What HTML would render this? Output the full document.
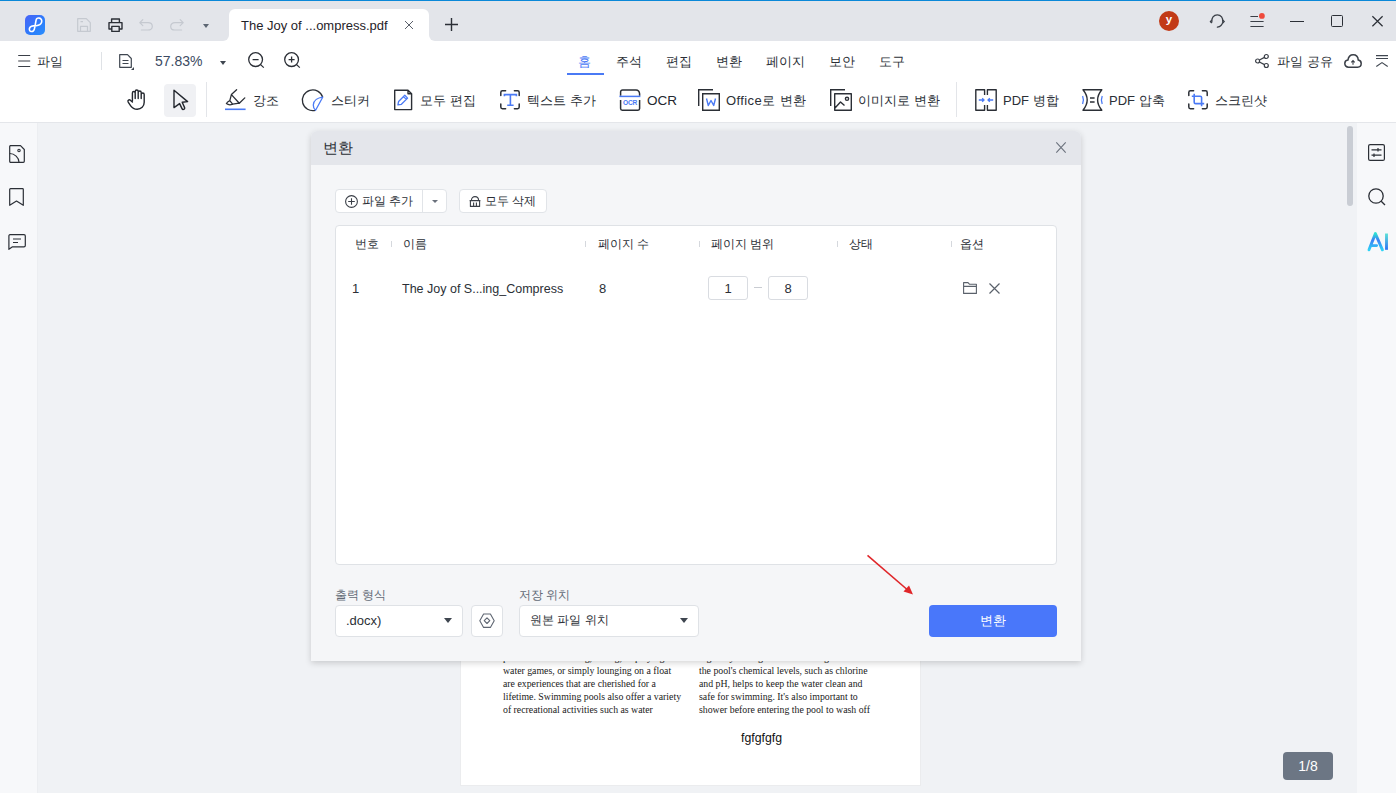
<!DOCTYPE html>
<html><head><meta charset="utf-8">
<style>
*{box-sizing:border-box}
html,body{margin:0;padding:0;width:1396px;height:793px;overflow:hidden;background:#f0f2f5;font-family:"Liberation Sans",sans-serif;color:#23272e}
.a{position:absolute}
svg{position:absolute;overflow:visible}
.t{position:absolute;white-space:nowrap;line-height:1}
.k{font-size:13px;color:#2b2f36}
.k2{font-size:12px;color:#2b2f36}
.k3{font-size:12px;color:#2b2f36}
</style></head><body>
<!-- top line -->
<div class="a" style="left:0;top:0;width:1396px;height:1px;background:#0a88d8"></div>
<!-- title bar -->
<div class="a" style="left:0;top:1px;width:1396px;height:40px;background:#e3e5ea"></div>

<!-- TITLEBAR CONTENT -->
<div class="a" style="left:25px;top:15px;width:20px;height:20px;border-radius:5px;background:linear-gradient(135deg,#4a63f7,#2c7dfb 60%,#2a8ffd)"></div>
<svg style="left:25px;top:15px" width="20" height="20" viewBox="0 0 20 20"><path d="M9.8 12.2 L11.1 5.2 C11.4 3.6 12.8 2.9 14.2 3.1 C16.2 3.4 17.2 5.4 16.6 7.3 C16 9.3 13.8 10.5 11.2 10.7 L8.3 10.9 C5.6 11.1 4 12.8 4.4 14.8 C4.8 16.6 7 17.1 8.4 15.9 C9.3 15.1 9.6 13.8 9.8 12.2" fill="none" stroke="#fff" stroke-width="1.6" stroke-linecap="round" stroke-linejoin="round"/></svg>
<!-- save (disabled) -->
<svg style="left:77px;top:18px" width="14" height="14" viewBox="0 0 14 14"><path d="M0.7 13.3 V0.7 H9.3 L13.3 4.7 V13.3 Z M3.5 13.3 V8.3 H10.5 V13.3 M3.5 3.6 H6" fill="none" stroke="#c5c9d0" stroke-width="1.2" stroke-linejoin="round"/></svg>
<!-- print -->
<svg style="left:108px;top:18px" width="15" height="14" viewBox="0 0 15 14"><path d="M3.6 4.6 V1 H11.4 V4.6 M3.2 11 H1 V4.6 H14 V11 H11.8 M3.8 8.4 H11.2 V13.4 H3.8 Z" fill="none" stroke="#2b2f36" stroke-width="1.4" stroke-linejoin="round"/></svg>
<!-- undo -->
<svg style="left:139px;top:19px" width="14" height="12" viewBox="0 0 14 12"><path d="M2.4 11 H9 C11.7 11 13.3 9.4 13.3 7.4 C13.3 5.4 11.7 3.7 9 3.7 H0.8 M3.8 0.7 L0.8 3.7 L3.8 6.7" fill="none" stroke="#c5c9d0" stroke-width="1.2" stroke-linejoin="round" stroke-linecap="round"/></svg>
<!-- redo -->
<svg style="left:170px;top:18px" width="14" height="13" viewBox="0 0 14 13"><path d="M11.6 12 H5 C2.3 12 0.7 10.4 0.7 8.4 C0.7 6.4 2.3 4.7 5 4.7 H13.2 M10.2 1.7 L13.2 4.7 L10.2 7.7" fill="none" stroke="#c5c9d0" stroke-width="1.2" stroke-linejoin="round" stroke-linecap="round"/></svg>
<svg style="left:203px;top:24px" width="6" height="4" viewBox="0 0 6 4"><path d="M0 0 H6 L3 4 Z" fill="#5d6673"/></svg>
<!-- tab -->
<div class="a" style="left:229px;top:9px;width:200px;height:32px;background:#fff;border-radius:6px 6px 0 0"></div>
<div class="a" style="left:223px;top:35px;width:6px;height:6px;background:#fff"></div>
<div class="a" style="left:217px;top:29px;width:12px;height:12px;background:#e3e5ea;border-radius:0 0 6px 0"></div>
<div class="a" style="left:429px;top:35px;width:6px;height:6px;background:#fff"></div>
<div class="a" style="left:429px;top:29px;width:12px;height:12px;background:#e3e5ea;border-radius:0 0 0 6px"></div>
<div class="t" style="left:241px;top:19px;font-size:13px;color:#1f2329">The Joy of ...ompress.pdf</div>
<svg style="left:404px;top:21px" width="10" height="8" viewBox="0 0 10 8"><path d="M1 0 L9 8 M9 0 L1 8" stroke="#5a606a" stroke-width="1"/></svg>
<svg style="left:445px;top:18px" width="13" height="13" viewBox="0 0 13 13"><path d="M6.5 0 V13 M0 6.5 H13" stroke="#2b2f36" stroke-width="1.4"/></svg>
<!-- avatar -->
<div class="a" style="left:1159px;top:11px;width:20px;height:20px;border-radius:50%;background:#c23a17"></div>
<div class="t" style="left:1159px;top:14px;width:20px;text-align:center;font-size:11.5px;font-weight:bold;color:#fff">y</div>
<!-- headset -->
<svg style="left:1210px;top:14px" width="15" height="14" viewBox="0 0 15 14"><path d="M1.8 8.2 C1.2 4 3.8 0.8 7.3 0.8 C10.8 0.8 13.4 4 12.8 8.2 C12.2 11 10.4 12.8 7.4 13.2" fill="none" stroke="#3a3f47" stroke-width="1.3" stroke-linecap="round"/><path d="M1.6 6.2 L0.4 7.6 L1.8 9 M12.9 6.2 L14.2 7.6 L12.8 9" fill="none" stroke="#3a3f47" stroke-width="1.2"/></svg>
<!-- menu -->
<svg style="left:1250px;top:12px" width="16" height="16" viewBox="0 0 16 16"><path d="M0.4 4.5 H8 M0.4 9.5 H13.6 M0.4 14.5 H13.6" stroke="#3a3f47" stroke-width="1.1"/><circle cx="11.9" cy="3.9" r="2.9" fill="#ef4a3c"/></svg>
<!-- min max close -->
<div class="a" style="left:1290px;top:20.6px;width:14px;height:1.2px;background:#2b2f36"></div>
<div class="a" style="left:1331px;top:15px;width:12px;height:11.6px;border:1.2px solid #2b2f36;border-radius:1.5px"></div>
<svg style="left:1371.5px;top:15.8px" width="11" height="10.5" viewBox="0 0 11 10.5"><path d="M0.4 0.3 L10.6 10.2 M10.6 0.3 L0.4 10.2" stroke="#2b2f36" stroke-width="1.2"/></svg>

<!-- toolbar -->
<div class="a" style="left:0;top:41px;width:1396px;height:81px;background:#fff"></div>

<!-- TOOLBAR CONTENT -->
<svg style="left:18px;top:55px" width="13" height="12" viewBox="0 0 13 12"><path d="M0.2 0.5 H12.2 M0.2 6 H12.2 M0.2 11.5 H12.2" stroke="#3a3f47" stroke-width="1.1"/></svg>
<div class="t k" style="left:37px;top:55px">파일</div>
<div class="a" style="left:101px;top:52px;width:1px;height:18px;background:#dfe2e6"></div>
<svg style="left:119px;top:54px" width="15" height="16" viewBox="0 0 15 16"><path d="M0.7 0.7 H8.5 L12.3 4.5 V13.3 H0.7 Z M3.5 6.5 H9.5 M3.5 9.5 H9.5" fill="none" stroke="#3f4650" stroke-width="1.2" stroke-linejoin="round"/><path d="M15 13 V16 H12 Z" fill="#3f4650"/></svg>
<div class="t" style="left:155px;top:54px;font-size:14px;color:#3b4a62">57.83%</div>
<svg style="left:220px;top:61px" width="6" height="4" viewBox="0 0 6 4"><path d="M0 0 H6 L3 4 Z" fill="#3f4650"/></svg>
<svg style="left:248px;top:52px" width="17" height="16" viewBox="0 0 17 16"><circle cx="7.6" cy="7.6" r="6.9" fill="none" stroke="#2b2f36" stroke-width="1.3"/><path d="M4.6 7.6 H10.6 M12.6 12.6 L15.8 15.6" stroke="#2b2f36" stroke-width="1.3"/></svg>
<svg style="left:284px;top:52px" width="17" height="16" viewBox="0 0 17 16"><circle cx="7.6" cy="7.6" r="6.9" fill="none" stroke="#2b2f36" stroke-width="1.3"/><path d="M4.6 7.6 H10.6 M7.6 4.6 V10.6 M12.6 12.6 L15.8 15.6" stroke="#2b2f36" stroke-width="1.3"/></svg>
<!-- tabs -->
<div class="t k" style="left:578px;top:55px;color:#4a7af5">홈</div>
<div class="a" style="left:567px;top:73px;width:37px;height:2px;background:#4a7af5"></div>
<div class="t k" style="left:616px;top:55px">주석</div>
<div class="t k" style="left:666px;top:55px">편집</div>
<div class="t k" style="left:716px;top:55px">변환</div>
<div class="t k" style="left:766px;top:55px">페이지</div>
<div class="t k" style="left:829px;top:55px">보안</div>
<div class="t k" style="left:879px;top:55px">도구</div>
<!-- right of row2 -->
<svg style="left:1255px;top:54px" width="14" height="14" viewBox="0 0 14 14"><circle cx="11.3" cy="2.5" r="2" fill="none" stroke="#3a3f47" stroke-width="1.2"/><circle cx="2.6" cy="7" r="2" fill="none" stroke="#3a3f47" stroke-width="1.2"/><circle cx="11.3" cy="11.5" r="2" fill="none" stroke="#3a3f47" stroke-width="1.2"/><path d="M4.4 6 L9.5 3.4 M4.4 8 L9.5 10.6" stroke="#3a3f47" stroke-width="1.2"/></svg>
<div class="t k" style="left:1277px;top:55px">파일 공유</div>
<svg style="left:1344px;top:54px" width="18" height="14" viewBox="0 0 18 14"><path d="M4.5 13.2 C2.3 13.2 0.8 11.6 0.8 9.6 C0.8 7.7 2.2 6.3 3.9 6.1 C4.4 3 6.6 0.8 9.2 0.8 C11.9 0.8 14 3 14.3 6.1 C16 6.4 17.2 7.8 17.2 9.6 C17.2 11.6 15.7 13.2 13.6 13.2 Z" fill="none" stroke="#3a3f47" stroke-width="1.5"/><path d="M9 10.8 V6.8 M7.3 8.3 L9 6.6 L10.7 8.3" fill="none" stroke="#3a3f47" stroke-width="1.1"/></svg>
<svg style="left:1376px;top:55px" width="12" height="12" viewBox="0 0 12 12"><path d="M0 0.6 H12 M0 3.5 H12 M0.3 11.5 L6 7.6 L11.7 11.5" fill="none" stroke="#3f4650" stroke-width="1.1"/></svg>
<!-- row3 -->
<svg style="left:127px;top:89px" width="20" height="21" viewBox="0 0 20 21"><path d="M5.4 12 V4 C5.4 2 8.2 2 8.2 4 V9.6 M8.2 9.6 V2.4 C8.2 0.5 11.2 0.5 11.2 2.4 V9.6 M11.2 9.6 V3.4 C11.2 1.5 14.2 1.5 14.2 3.4 V9.6 M14.2 9.6 V5.4 C14.2 3.5 17.2 3.5 17.2 5.4 V13.2 C17.2 17.4 14.2 20.2 10.2 20.2 C7.2 20.2 5.2 19 3.7 16.8 L1.2 13.2 C0.2 11.6 2.2 10 3.6 11.4 L5.4 13" fill="none" stroke="#23272e" stroke-width="1.4" stroke-linejoin="round" stroke-linecap="round"/></svg>
<div class="a" style="left:164px;top:84px;width:32px;height:33px;border-radius:4px;background:#f0f1f4"></div>
<svg style="left:172px;top:89px" width="17" height="22" viewBox="0 0 17 22"><path d="M2 1.2 L15.6 12.6 L10.2 13.2 L12.6 18.6 C12.9 19.4 12.4 20.2 11.6 20.4 C10.9 20.6 10.3 20.3 10 19.6 L7.6 14.6 L2 18.6 Z" fill="none" stroke="#23272e" stroke-width="1.4" stroke-linejoin="round"/></svg>
<div class="a" style="left:206px;top:82px;width:1px;height:35px;background:#e3e5e9"></div>
<!-- highlight -->
<svg style="left:225px;top:89px" width="22" height="22" viewBox="0 0 22 22"><path d="M11.6 0.8 L6.4 5.6 L4.8 11.6 C3.2 12.4 1.8 13.4 1.4 14.6 C3.2 16 5.8 16 7.6 15.2 L14.3 14.2 L6.4 5.6 M4.8 11.6 L7.6 15.2 M14.3 14.2 L19.8 8.9" fill="none" stroke="#2b2f36" stroke-width="1.3" stroke-linejoin="round" stroke-linecap="round"/><path d="M0 20.3 H20.6" stroke="#4a7af5" stroke-width="1.6"/></svg>
<div class="t k" style="left:253px;top:94px">강조</div>
<!-- sticker -->
<svg style="left:302px;top:89px" width="22" height="22" viewBox="0 0 22 22"><path d="M20.7 8.2 A10.4 10.4 0 1 0 13.4 21.3" fill="none" stroke="#2b2f36" stroke-width="1.3"/><path d="M20.7 8.2 L13.6 21.2 C12.2 20 11.2 18 11.3 16 C11.5 11.5 16 8.8 20.7 8.2 Z" fill="none" stroke="#4a7af5" stroke-width="1.3" stroke-linejoin="round"/></svg>
<div class="t k" style="left:331px;top:94px">스티커</div>
<!-- edit all -->
<svg style="left:394px;top:89px" width="19" height="22" viewBox="0 0 19 22"><path d="M0.7 1.2 H14 L17.6 4.8 V20.6 H0.7 Z M14 1.2 V4.8 H17.6" fill="none" stroke="#2b2f36" stroke-width="1.4" stroke-linejoin="round"/><path d="M3.9 15.9 L4.6 12.5 L10.8 6.3 L13.6 9.1 L7.4 15.3 Z M9.5 7.6 L12.3 10.4" fill="none" stroke="#4a7af5" stroke-width="1.3" stroke-linejoin="round"/></svg>
<div class="t k" style="left:420px;top:94px">모두 편집</div>
<!-- add text -->
<svg style="left:500px;top:90px" width="20" height="20" viewBox="0 0 20 20"><path d="M0.8 5.6 V2.4 C0.8 1.5 1.5 0.8 2.4 0.8 H5.6 M14.4 0.8 H17.6 C18.5 0.8 19.2 1.5 19.2 2.4 V5.6 M19.2 13.9 V17.1 C19.2 18 18.5 18.7 17.6 18.7 H14.4 M5.6 18.7 H2.4 C1.5 18.7 0.8 18 0.8 17.1 V13.9" fill="none" stroke="#2b2f36" stroke-width="1.5" stroke-linecap="round"/><path d="M4.4 6.2 V4.6 H16.4 V6.2 M10.4 4.6 V15.3 M7.2 15.3 H13.6" fill="none" stroke="#4a7af5" stroke-width="1.6"/></svg>
<div class="t k" style="left:527px;top:94px">텍스트 추가</div>
<!-- OCR -->
<svg style="left:619px;top:89px" width="22" height="22" viewBox="0 0 22 22"><path d="M1.6 6.8 V3 C1.6 1.8 2.4 0.9 3.6 0.9 H17 C19 0.9 20.4 2.6 20.6 4.8 V6.8 M1.6 11 V19.6 C1.6 20.6 2.3 21.2 3.2 21.2 H19 C19.9 21.2 20.6 20.6 20.6 19.6 V11" fill="none" stroke="#2b2f36" stroke-width="1.5"/><path d="M0.4 7.4 H21.4" stroke="#4a7af5" stroke-width="1.5"/><text x="11" y="16.1" text-anchor="middle" font-family="Liberation Sans" font-weight="bold" font-size="6.6" letter-spacing="-0.2" fill="#4a7af5">OCR</text></svg>
<div class="t" style="left:647px;top:94px;font-size:13.5px">OCR</div>
<!-- office -->
<svg style="left:698px;top:89px" width="22" height="22" viewBox="0 0 22 22"><path d="M0.7 17 V0.7 H15" fill="none" stroke="#2b2f36" stroke-width="1.4"/><path d="M4.7 4.7 H21.3 V21.3 H4.7 Z" fill="none" stroke="#2b2f36" stroke-width="1.4"/><path d="M8.5 9.5 L10.3 16.5 L13 11.5 L15.7 16.5 L17.5 9.5" fill="none" stroke="#4a7af5" stroke-width="1.4" stroke-linejoin="round"/></svg>
<div class="t k" style="left:726px;top:94px;letter-spacing:0.4px">Office로 변환</div>
<!-- image -->
<svg style="left:830px;top:89px" width="22" height="22" viewBox="0 0 22 22"><path d="M0.7 17 V0.7 H15" fill="none" stroke="#2b2f36" stroke-width="1.4"/><path d="M4.7 4.7 H21.3 V21.3 H4.7 Z M5 19 L10.5 13 L14.5 16.5 M17 9.8 m-1.6 0 a1.6 1.6 0 1 0 3.2 0 a1.6 1.6 0 1 0 -3.2 0" fill="none" stroke="#2b2f36" stroke-width="1.4" stroke-linejoin="round"/></svg>
<div class="t k" style="left:858px;top:94px">이미지로 변환</div>
<div class="a" style="left:956px;top:82px;width:1px;height:35px;background:#e3e5e9"></div>
<!-- merge -->
<svg style="left:975px;top:89px" width="23" height="22" viewBox="0 0 23 22"><path d="M9.6 6 V0.8 H0.8 V21.2 H9.6 V16 M12.4 6 V0.8 H21.2 V21.2 H12.4 V16" fill="none" stroke="#2b2f36" stroke-width="1.4" stroke-linejoin="round"/><path d="M3.8 11 H9 M7.2 9.2 L9 11 L7.2 12.8 M18.2 11 H13 M14.8 9.2 L13 11 L14.8 12.8" fill="none" stroke="#4a7af5" stroke-width="1.3"/></svg>
<div class="t k" style="left:1003px;top:94px">PDF 병합</div>
<!-- compress -->
<svg style="left:1082px;top:89px" width="21" height="22" viewBox="0 0 21 22"><path d="M1 0.8 H19.8 C16.4 5 15.6 8 15.6 11 C15.6 14 16.4 17 19.8 21.2 H1 C4.4 17 5.2 14 5.2 11 C5.2 8 4.4 5 1 0.8 Z" fill="none" stroke="#2b2f36" stroke-width="1.4" stroke-linejoin="round"/><path d="M8 9 H12.6 M8 13 H12.6" stroke="#2b2f36" stroke-width="1.5"/><path d="M0.6 7 C1.6 9.5 1.6 12.5 0.6 15 M20.2 7 C19.2 9.5 19.2 12.5 20.2 15" fill="none" stroke="#4a7af5" stroke-width="1.3"/></svg>
<div class="t k" style="left:1109px;top:94px">PDF 압축</div>
<!-- screenshot -->
<svg style="left:1188px;top:90px" width="20" height="20" viewBox="0 0 20 20"><path d="M0.8 5.6 V2.4 C0.8 1.5 1.5 0.8 2.4 0.8 H5.6 M14.4 0.8 H17.6 C18.5 0.8 19.2 1.5 19.2 2.4 V5.6 M19.2 13.9 V17.1 C19.2 18 18.5 18.7 17.6 18.7 H14.4 M5.6 18.7 H2.4 C1.5 18.7 0.8 18 0.8 17.1 V13.9" fill="none" stroke="#2b2f36" stroke-width="1.5" stroke-linecap="round"/><path d="M6.2 3.8 V12.2 C6.2 13 6.8 13.6 7.6 13.6 H16.2 M3.8 6.2 H12.2 C13 6.2 13.6 6.8 13.6 7.6 V16.2" fill="none" stroke="#4a7af5" stroke-width="1.6"/></svg>
<div class="t k" style="left:1215px;top:94px">스크린샷</div>

<div class="a" style="left:0;top:122px;width:1396px;height:1px;background:#e4e6ea"></div>
<!-- left sidebar -->
<div class="a" style="left:0;top:123px;width:38px;height:670px;background:#f7f8fa;border-right:1px solid #eceef1"></div>
<!-- right sidebar -->
<div class="a" style="left:1357px;top:123px;width:39px;height:670px;background:#f7f8fa"></div>

<!-- left sidebar icons -->
<svg style="left:9px;top:145px" width="16" height="18" viewBox="0 0 16 18"><path d="M1.2 0.7 H11.5 L15.3 4.5 V16.3 C15.3 16.8 15 17.3 14.3 17.3 H1.7 C1 17.3 0.7 16.8 0.7 16.3 V1.7 C0.7 1.2 1 0.7 1.7 0.7 Z" fill="none" stroke="#2b2f36" stroke-width="1.2" stroke-linejoin="round"/><path d="M0.7 8.5 C5.5 8.5 10 12.5 10 17.3" fill="none" stroke="#2b2f36" stroke-width="1.2"/><circle cx="10" cy="5.5" r="1.2" fill="none" stroke="#2b2f36" stroke-width="1.1"/></svg>
<svg style="left:9px;top:188px" width="15" height="18" viewBox="0 0 15 18"><path d="M0.7 1.5 C0.7 1 1 0.7 1.5 0.7 H13.5 C14 0.7 14.3 1 14.3 1.5 V17.3 L7.5 13 L0.7 17.3 Z" fill="none" stroke="#2b2f36" stroke-width="1.2" stroke-linejoin="round"/></svg>
<svg style="left:8px;top:234px" width="18" height="16" viewBox="0 0 18 16"><path d="M2 0.7 H16 C16.8 0.7 17.3 1.2 17.3 2 V11.5 C17.3 12.3 16.8 12.8 16 12.8 H4.5 L0.9 15.3 V2 C0.9 1.2 1.3 0.7 2 0.7 Z" fill="none" stroke="#2b2f36" stroke-width="1.2" stroke-linejoin="round"/><path d="M5 5 H13 M5 8.5 H10" stroke="#2b2f36" stroke-width="1.2"/></svg>
<!-- right sidebar icons -->
<svg style="left:1368px;top:144px" width="17" height="17" viewBox="0 0 17 17"><rect x="0.6" y="0.6" width="15.8" height="15.8" rx="1.5" fill="none" stroke="#2b2f36" stroke-width="1.2"/><path d="M3.5 5.8 H13.5 M3.5 11.2 H13.5 M10 4 V7.6 M6 9.4 V13" stroke="#2b2f36" stroke-width="1.2"/></svg>
<svg style="left:1368px;top:188px" width="18" height="18" viewBox="0 0 18 18"><circle cx="8" cy="8" r="7.2" fill="none" stroke="#2b2f36" stroke-width="1.3"/><path d="M13.2 13.2 L17 17" stroke="#2b2f36" stroke-width="1.3"/></svg>
<svg style="left:1366px;top:231px" width="24" height="22" viewBox="0 0 24 22"><defs><linearGradient id="ai" x1="0" y1="0" x2="0" y2="1"><stop offset="0" stop-color="#2fe0d2"/><stop offset="0.4" stop-color="#3b7ff6"/><stop offset="1" stop-color="#2ed3f6"/></linearGradient><linearGradient id="ai2" gradientUnits="userSpaceOnUse" x1="0" y1="2" x2="0" y2="19"><stop offset="0" stop-color="#5ee6d6"/><stop offset="1" stop-color="#2d6ff5"/></linearGradient></defs><path d="M3 18.8 L9.4 2.6 L16.4 18.8 M6 14.6 H10.6" fill="none" stroke="url(#ai)" stroke-width="2.9" stroke-linecap="round" stroke-linejoin="round"/><path d="M20.5 2.5 V18.8" stroke="url(#ai2)" stroke-width="2.9"/></svg>

<!-- scrollbar -->
<div class="a" style="left:1347px;top:126px;width:6px;height:80px;border-radius:3px;background:#c9cdd4"></div>
<!-- pdf page -->

<div class="a" style="left:460px;top:600px;width:461px;height:186px;background:#fff;border:1px solid #ebecee;border-top:none"></div>
<div class="a" style="left:503px;top:652px;font-family:'Liberation Serif',serif;font-size:9.8px;line-height:12.9px;color:#1a1a1a;white-space:nowrap">
<div>pleasure in swimming, diving, or playing</div>
<div>water games, or simply lounging on a float</div>
<div>are experiences that are cherished for a</div>
<div>lifetime. Swimming pools also offer a variety</div>
<div>of recreational activities such as water</div>
</div>
<div class="a" style="left:699px;top:652px;font-family:'Liberation Serif',serif;font-size:9.8px;line-height:12.9px;color:#1a1a1a;white-space:nowrap">
<div>regularly testing and maintaining balance of</div>
<div>the pool's chemical levels, such as chlorine</div>
<div>and pH, helps to keep the water clean and</div>
<div>safe for swimming. It's also important to</div>
<div>shower before entering the pool to wash off</div>
</div>
<div class="t" style="left:741px;top:732px;font-size:12.3px;color:#111">fgfgfgfg</div>

<!-- page counter -->
<div class="a" style="left:1283px;top:752px;width:50px;height:28px;border-radius:4px;background:#6c7684"></div>
<div class="t" style="left:1283px;top:759px;width:50px;text-align:center;font-size:14px;color:#fff">1/8</div>

<!-- dialog -->
<div class="a" style="left:311px;top:131px;width:770px;height:530px;border-radius:6px 6px 0 0;background:#f5f6f8;box-shadow:0 2px 6px rgba(0,0,0,0.17);overflow:hidden">
  <div class="a" style="left:0;top:0;width:770px;height:34px;background:#e4e6eb"></div>
</div>
<div class="t" style="left:323px;top:141px;font-size:14.5px;color:#2b2f36">변환</div>
<svg style="left:1056px;top:142px" width="10" height="11" viewBox="0 0 10 11"><path d="M0.3 0.3 L9.7 10.7 M9.7 0.3 L0.3 10.7" stroke="#6b727d" stroke-width="1.1"/></svg>
<!-- buttons -->
<div class="a" style="left:335px;top:189px;width:112px;height:24px;background:#fff;border:1px solid #e1e4e8;border-radius:4px"></div>
<div class="a" style="left:422px;top:190px;width:1px;height:22px;background:#e1e4e8"></div>
<svg style="left:345px;top:195px" width="13" height="13" viewBox="0 0 13 13"><circle cx="6.5" cy="6.5" r="5.9" fill="none" stroke="#3a3f47" stroke-width="1.1"/><path d="M6.5 3.2 V9.8 M3.2 6.5 H9.8" stroke="#3a3f47" stroke-width="1.1"/></svg>
<div class="t k2" style="left:362px;top:195px">파일 추가</div>
<svg style="left:432px;top:200px" width="6" height="3" viewBox="0 0 6 3"><path d="M0 0 H6 L3 3 Z" fill="#6a717c"/></svg>
<div class="a" style="left:459px;top:189px;width:88px;height:24px;background:#fff;border:1px solid #e1e4e8;border-radius:4px"></div>
<svg style="left:469px;top:196px" width="12" height="11" viewBox="0 0 12 11"><path d="M0.6 4.6 H11.4 M1.4 4.6 V10.4 H10.6 V4.6 M2.4 4.6 C2.4 2.2 4 0.6 6 0.6 C8 0.6 9.6 2.2 9.6 4.6 M4.6 6.6 V10.4 M7.4 6.6 V10.4" fill="none" stroke="#3a3f47" stroke-width="1.1" stroke-linejoin="round"/></svg>
<div class="t k2" style="left:485px;top:195px">모두 삭제</div>
<!-- table -->
<div class="a" style="left:335px;top:225px;width:722px;height:340px;background:#fff;border:1px solid #dfe2e6;border-radius:4px"></div>
<div class="t k3" style="left:355px;top:238px">번호</div>
<div class="a" style="left:391px;top:241px;width:1px;height:6px;background:#d5d8dd"></div>
<div class="t k3" style="left:403px;top:238px">이름</div>
<div class="a" style="left:585px;top:241px;width:1px;height:6px;background:#d5d8dd"></div>
<div class="t k3" style="left:598px;top:238px">페이지 수</div>
<div class="a" style="left:699px;top:241px;width:1px;height:6px;background:#d5d8dd"></div>
<div class="t k3" style="left:711px;top:238px">페이지 범위</div>
<div class="a" style="left:837px;top:241px;width:1px;height:6px;background:#d5d8dd"></div>
<div class="t k3" style="left:849px;top:238px">상태</div>
<div class="a" style="left:951px;top:241px;width:1px;height:6px;background:#d5d8dd"></div>
<div class="t k3" style="left:960px;top:238px">옵션</div>
<!-- row -->
<div class="t k" style="left:352px;top:282px">1</div>
<div class="t k" style="left:402px;top:283px;font-size:12.5px">The Joy of S...ing_Compress</div>
<div class="t k" style="left:599px;top:282px">8</div>
<div class="a" style="left:708px;top:276px;width:40px;height:24px;background:#fff;border:1px solid #d9dce1;border-radius:3px"></div>
<div class="t k" style="left:708px;top:282px;width:40px;text-align:center">1</div>
<div class="a" style="left:754px;top:287px;width:8px;height:1px;background:#c9ccd2"></div>
<div class="a" style="left:768px;top:276px;width:40px;height:24px;background:#fff;border:1px solid #d9dce1;border-radius:3px"></div>
<div class="t k" style="left:768px;top:282px;width:40px;text-align:center">8</div>
<svg style="left:963px;top:282px" width="14" height="12" viewBox="0 0 14 12"><path d="M0.6 11.4 V0.6 H5 L6.4 2.2 H13.4 V11.4 Z M0.6 4.4 H13.4" fill="none" stroke="#5a616b" stroke-width="1.1" stroke-linejoin="round"/></svg>
<svg style="left:989px;top:283px" width="11" height="11" viewBox="0 0 11 11"><path d="M0.5 0.5 L10.5 10.5 M10.5 0.5 L0.5 10.5" stroke="#5a616b" stroke-width="1.2"/></svg>
<!-- bottom -->
<div class="t k2" style="left:335px;top:589px;color:#626a76">출력 형식</div>
<div class="a" style="left:335px;top:605px;width:128px;height:32px;background:#fff;border:1px solid #dfe2e6;border-radius:4px"></div>
<div class="t k" style="left:346px;top:614px">.docx)</div>
<svg style="left:444px;top:618px" width="8" height="5" viewBox="0 0 8 5"><path d="M0 0 H8 L4 5 Z" fill="#3f4650"/></svg>
<div class="a" style="left:471px;top:605px;width:32px;height:32px;background:#fff;border:1px solid #dfe2e6;border-radius:4px"></div>
<svg style="left:479px;top:613px" width="16" height="16" viewBox="0 0 16 16"><path d="M4.6 1 H11.4 L15.2 7.7 L11.4 14.4 H4.6 L0.8 7.7 Z" fill="none" stroke="#5f6672" stroke-width="1.1" stroke-linejoin="round"/><path d="M8 4.9 L10.8 7.7 L8 10.5 L5.2 7.7 Z" fill="none" stroke="#5f6672" stroke-width="1.1" stroke-linejoin="round"/></svg>
<div class="t k2" style="left:519px;top:589px;color:#626a76">저장 위치</div>
<div class="a" style="left:519px;top:605px;width:180px;height:32px;background:#fff;border:1px solid #dfe2e6;border-radius:4px"></div>
<div class="t k" style="left:530px;top:614px;font-size:12px">원본 파일 위치</div>
<svg style="left:680px;top:618px" width="8" height="5" viewBox="0 0 8 5"><path d="M0 0 H8 L4 5 Z" fill="#3f4650"/></svg>
<div class="a" style="left:929px;top:605px;width:128px;height:32px;background:#4977fa;border-radius:4px"></div>
<div class="t" style="left:929px;top:614px;width:128px;text-align:center;font-size:13px;color:#fff">변환</div>
<svg style="left:860px;top:550px" width="60" height="50" viewBox="0 0 60 50"><path d="M7.5 5.3 L50 42" stroke="#e0262a" stroke-width="1.6"/><path d="M53 44.5 L43.5 41.5 L49 35.5 Z" fill="#e0262a"/></svg>
</body></html>
